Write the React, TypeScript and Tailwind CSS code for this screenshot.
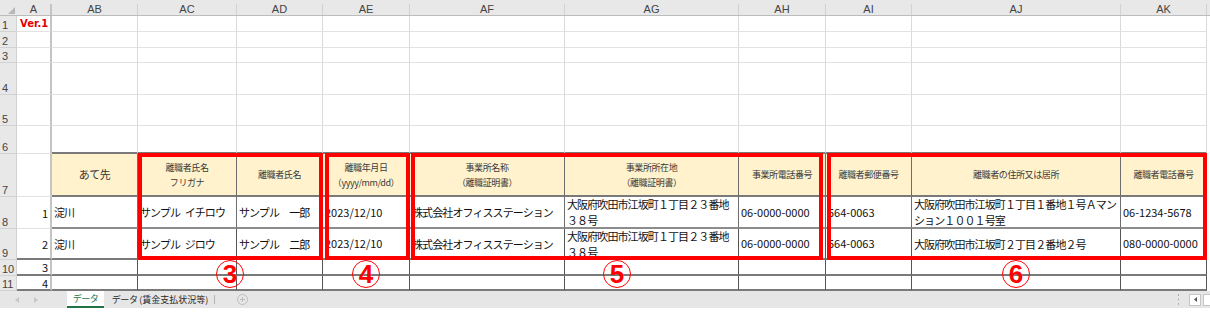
import React from "react";

const JP = "font-['Noto_Sans_CJK_JP',sans-serif]";
const LAT = "font-['Liberation_Sans',sans-serif]";

const COLS = [
  { key: "A", w: "w-[35px]" },
  { key: "AB", w: "w-[86px]" },
  { key: "AC", w: "w-[99px]" },
  { key: "AD", w: "w-[86px]" },
  { key: "AE", w: "w-[87px]" },
  { key: "AF", w: "w-[155px]" },
  { key: "AG", w: "w-[174px]" },
  { key: "AH", w: "w-[87px]" },
  { key: "AI", w: "w-[86px]" },
  { key: "AJ", w: "w-[209px]" },
  { key: "AK", w: "w-[86px]" },
];

const ROW_H = [
  "h-[16px]",
  "h-[16px]",
  "h-[15px]",
  "h-[32px]",
  "h-[31px]",
  "h-[28px]",
  "h-[43px]",
  "h-[32px]",
  "h-[31px]",
  "h-[16px]",
  "h-[15px]",
];

type Kind = "ver" | "right" | "jp" | "num" | "head" | "headBig";
type Cell = { kind: Kind; t: string[] } | null;

const ADDR_OFFICE = ["大阪府吹田市江坂町１丁目２３番地", "３８号"];
const OFFICE = "株式会社オフィスステーション";

// 行1・7〜11 の中身（列 A〜AK）
const ROWS: Record<number, Cell[]> = {
  0: [{ kind: "ver", t: ["Ver.1"] }],
  6: [
    null,
    { kind: "headBig", t: ["あて先"] },
    { kind: "head", t: ["離職者氏名", "フリガナ"] },
    { kind: "head", t: ["離職者氏名"] },
    { kind: "head", t: ["離職年月日", "（yyyy/mm/dd）"] },
    { kind: "head", t: ["事業所名称", "（離職証明書）"] },
    { kind: "head", t: ["事業所所在地", "（離職証明書）"] },
    { kind: "head", t: ["事業所電話番号"] },
    { kind: "head", t: ["離職者郵便番号"] },
    { kind: "head", t: ["離職者の住所又は居所"] },
    { kind: "head", t: ["離職者電話番号"] },
  ],
  7: [
    { kind: "right", t: ["1"] },
    { kind: "jp", t: ["淀川"] },
    { kind: "jp", t: ["サンプル\u2002イチロウ"] },
    { kind: "jp", t: ["サンプル　一郎"] },
    { kind: "num", t: ["2023/12/10"] },
    { kind: "jp", t: [OFFICE] },
    { kind: "jp", t: ADDR_OFFICE },
    { kind: "num", t: ["06-0000-0000"] },
    { kind: "num", t: ["564-0063"] },
    { kind: "jp", t: ["大阪府吹田市江坂町１丁目１番地１号Ａマン", "ション１００１号室"] },
    { kind: "num", t: ["06-1234-5678"] },
  ],
  8: [
    { kind: "right", t: ["2"] },
    { kind: "jp", t: ["淀川"] },
    { kind: "jp", t: ["サンプル\u2002ジロウ"] },
    { kind: "jp", t: ["サンプル　二郎"] },
    { kind: "num", t: ["2023/12/10"] },
    { kind: "jp", t: [OFFICE] },
    { kind: "jp", t: ADDR_OFFICE },
    { kind: "num", t: ["06-0000-0000"] },
    { kind: "num", t: ["564-0063"] },
    { kind: "jp", t: ["大阪府吹田市江坂町２丁目２番地２号"] },
    { kind: "num", t: ["080-0000-0000"] },
  ],
  9: [{ kind: "right", t: ["3"] }],
  10: [{ kind: "right", t: ["4"] }],
};

const borderFor = (r: number, c: number): string => {
  if (c === 0) {
    if (r >= 8) return "border-r-2 border-r-[#c4c4c4] border-b-2 border-b-[#7a7a7a]";
    return "border-r-2 border-r-[#c4c4c4] border-b border-b-[#e2e2e2]";
  }
  if (r < 5) return "border-r border-r-[#dadada] border-b border-b-[#e2e2e2]";
  if (r === 5) return "border-r border-r-[#dadada] border-b-2 border-b-[#7a7a7a]";
  if (r === 6) return "bg-[#fff2cc] border-r border-r-[#6e6e6e] border-b-2 border-b-[#7a7a7a]";
  if (r === 7) return "border-r border-r-[#6e6e6e] border-b-2 border-b-[#8c8c8c]";
  return "border-r border-r-[#555555] border-b-2 border-b-[#7a7a7a]";
};

const CellBody: React.FC<{ cell: Cell }> = ({ cell }) => {
  if (!cell) return null;
  switch (cell.kind) {
    case "ver":
      return (
        <span className="pl-[3px] font-['DejaVu_Sans',sans-serif] text-[10px] font-bold text-[#e00000]">
          {cell.t[0]}
        </span>
      );
    case "right":
      return (
        <span className={`${JP} w-full pr-[2px] text-right text-[11px] leading-[12px] text-[#111]`}>
          {cell.t[0]}
        </span>
      );
    case "num":
      return (
        <span className={`${JP} pl-[2px] text-[11px] text-[#111]`}>{cell.t[0]}</span>
      );
    case "jp":
      return (
        <div className={`${JP} pl-[2px] text-[11px] leading-[16px] tracking-[-0.9px] text-[#111]`}>
          {cell.t.map((line) => (
            <div key={line}>{line}</div>
          ))}
        </div>
      );
    case "headBig":
      return (
        <span className={`${JP} w-full text-center text-[11px] tracking-[-0.5px] text-[#333]`}>
          {cell.t[0]}
        </span>
      );
    case "head":
      return (
        <div className={`${JP} w-full text-center text-[9px] leading-[15px] tracking-[-0.4px] text-[#3a3a3a]`}>
          {cell.t.map((line) => (
            <div key={line}>{line}</div>
          ))}
        </div>
      );
  }
};

const SheetTabs: React.FC = () => (
  <div className={`${JP} flex h-[17px] items-stretch bg-[#e6e6e6] text-[9px] [font-feature-settings:'palt']`}>
    <div className="flex w-[67px] items-center gap-[15px] pl-[15px]">
      <svg width="4" height="6" viewBox="0 0 4 6">
        <polygon points="4,0 4,6 0,3" fill="#c8c8c8" />
      </svg>
      <svg width="4" height="6" viewBox="0 0 4 6">
        <polygon points="0,0 0,6 4,3" fill="#c8c8c8" />
      </svg>
    </div>
    <div className="flex w-[37px] flex-col bg-white">
      <div className="flex flex-1 items-center justify-center text-[#217346]">データ</div>
      <div className="h-[2px] bg-[#217346]" />
    </div>
    <div className="flex w-[110px] items-center pl-[8px] text-[#262626]">データ (賃金支払状況等)</div>
    <div className="my-[4px] w-px bg-[#b4b4b4]" />
    <div className="flex w-[33px] items-center justify-end">
      <svg width="11" height="11" viewBox="0 0 11 11">
        <circle cx="5.5" cy="5.5" r="5" fill="none" stroke="#bdbdbd" />
        <path d="M5.5 3v5M3 5.5h5" stroke="#bdbdbd" />
      </svg>
    </div>
    <div className="flex-1" />
    <div className="flex items-center">
      <svg width="3" height="11" viewBox="0 0 3 11">
        <rect x="1" y="0" width="1" height="2" fill="#b0b0b0" />
        <rect x="1" y="4.5" width="1" height="2" fill="#b0b0b0" />
        <rect x="1" y="9" width="1" height="2" fill="#b0b0b0" />
      </svg>
    </div>
    <div className="ml-[9px] flex items-center">
      <div className="flex h-[12px] w-[12px] items-center justify-center border border-[#c6c6c6] bg-white">
        <svg width="3" height="5" viewBox="0 0 3 5">
          <polygon points="3,0 3,5 0,2.5" fill="#555" />
        </svg>
      </div>
    </div>
    <div className="ml-[2px] flex items-center">
      <div className="h-[12px] w-[7px] border-y border-l border-[#c6c6c6] bg-white" />
    </div>
  </div>
);

const Marker: React.FC<{ n: string; pos: string }> = ({ n, pos }) => (
  <div
    className={`absolute ${pos} flex h-[28px] w-[28px] items-center justify-center rounded-full border border-[#ff0000] ${LAT} text-[26px] font-bold leading-none text-[#ff0000]`}
  >
    {n}
  </div>
);

const App: React.FC = () => {
  return (
    <div className="relative h-[320px] w-[1210px] overflow-hidden bg-white">
      {/* 列見出し */}
      <div className={`${LAT} flex h-[16px] border-b border-[#bcbcbc] bg-[#e8e8e8] text-[11px] text-[#444]`}>
        <div className="flex w-[17px] shrink-0 items-end justify-end pb-[1px] pr-[2px]">
          <svg width="7" height="7" viewBox="0 0 7 7">
            <polygon points="7,0 7,7 0,7" fill="#b8b8b8" />
          </svg>
        </div>
        {COLS.map((col, i) => (
          <div
            key={col.key}
            className={`${col.w} mt-[4px] flex h-[11px] shrink-0 items-end justify-center leading-[11px] ${
              i === 0 ? "border-r-2 border-[#c4c4c4]" : "border-r border-[#d2d2d2]"
            }`}
          >
            {col.key}
          </div>
        ))}
      </div>

      {/* 行 */}
      {ROW_H.map((h, r) => (
        <div key={r} className={`flex ${h}`}>
          <div
            className={`${LAT} flex w-[17px] shrink-0 items-end border-b border-r border-[#d2d2d2] bg-[#e8e8e8] pl-[2px] text-[11px] leading-[12px] text-[#444]`}
          >
            {r + 1}
          </div>
          {COLS.map((col, c) => (
            <div
              key={col.key}
              className={`${col.w} flex shrink-0 items-center overflow-hidden whitespace-nowrap ${borderFor(r, c)}`}
            >
              <CellBody cell={ROWS[r]?.[c] ?? null} />
            </div>
          ))}
        </div>
      ))}

      <SheetTabs />

      {/* 赤枠と番号 */}
      <div className="pointer-events-none absolute left-[138px] top-[153px] h-[107px] w-[185px] border-4 border-[#ff0000]" />
      <div className="pointer-events-none absolute left-[325px] top-[153px] h-[107px] w-[85px] border-4 border-[#ff0000]" />
      <div className="pointer-events-none absolute left-[411px] top-[153px] h-[107px] w-[412px] border-4 border-[#ff0000]" />
      <div className="pointer-events-none absolute left-[827px] top-[153px] h-[107px] w-[380px] border-4 border-[#ff0000]" />
      <Marker n="3" pos="left-[216px] top-[260px]" />
      <Marker n="4" pos="left-[352px] top-[260px]" />
      <Marker n="5" pos="left-[603px] top-[260px]" />
      <Marker n="6" pos="left-[1002px] top-[260px]" />
    </div>
  );
};

export default App;
